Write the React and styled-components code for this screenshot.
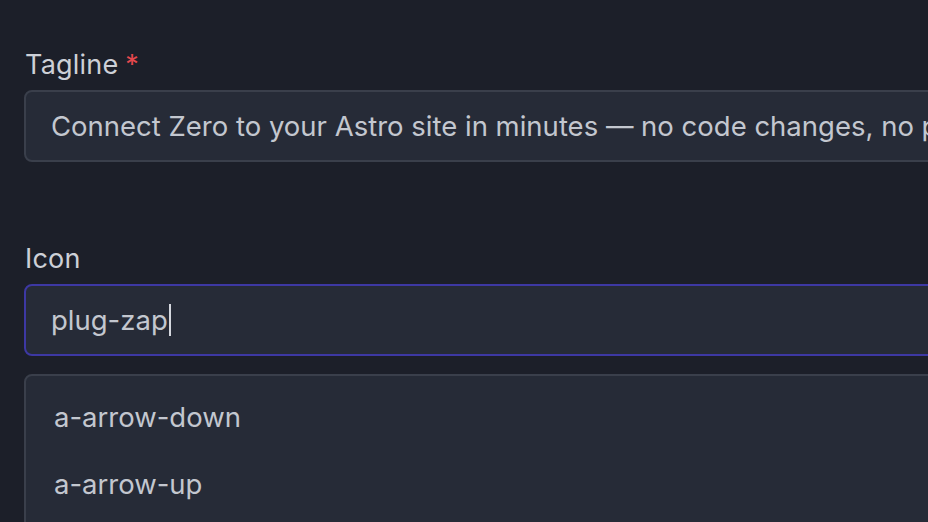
import React from "react";
import styled, { createGlobalStyle } from "styled-components";

const GlobalStyle = createGlobalStyle`
    html, body {
        margin: 0;
        padding: 0;
        background: #1c1f29;
        overflow: hidden;
    }
    body {
        font-family: Inter, "Noto Sans", sans-serif;
        -webkit-font-smoothing: antialiased;
    }
`;

const Page = styled.div`
    width: 904px;
    height: 474px;
    overflow: hidden;
    padding: 48px 0 0 24px;
`;

const Field = styled.div`
    display: flex;
    flex-direction: column;
    gap: 8px;
    margin-bottom: ${(p) => p.$spacing || 0}px;
`;

const Label = styled.label`
    font-size: 27px;
    font-weight: 400;
    color: #cdd0d7;
    line-height: 34px;
    padding-left: 1px;
    letter-spacing: 0.2px;
`;

const Required = styled.span`
    color: #e5484d;
    margin-left: 7px;
`;

const Input = styled.div`
    box-sizing: border-box;
    width: 960px;
    height: 72px;
    display: flex;
    align-items: center;
    padding: 0 25px;
    background: #262b37;
    border: 2px solid ${(p) => (p.$focused ? "#3d38a3" : "#3a3f4b")};
    border-radius: 8px;
    font-size: 27.5px;
    color: #c3c7cf;
    white-space: nowrap;
    overflow: hidden;
`;

const Caret = styled.span`
    display: inline-block;
    width: 2px;
    height: 32px;
    background: #d4d7de;
    margin-left: 1px;
`;

const Dropdown = styled.ul`
    box-sizing: border-box;
    width: 960px;
    list-style: none;
    margin: 18px 0 0;
    padding: 7px 0 0;
    background: #262b37;
    border: 2px solid #3a3f4b;
    border-radius: 8px;
    height: 200px;
`;

const Option = styled.li`
    height: 67px;
    display: flex;
    align-items: center;
    padding: 0 28px;
    font-size: 27.5px;
    color: #c3c7cf;
`;

const icons = ["a-arrow-down", "a-arrow-up"];

export default function App() {
    return (
        <Page>
            <GlobalStyle />
            <Field $spacing={80}>
                <Label>
                    Tagline<Required>*</Required>
                </Label>
                <Input>
                    Connect Zero to your Astro site in minutes — no code changes, no p
                </Input>
            </Field>
            <Field>
                <Label>Icon</Label>
                <Input $focused>
                    plug-zap
                    <Caret />
                </Input>
            </Field>
            <Dropdown>
                {icons.map((name) => (
                    <Option key={name}>{name}</Option>
                ))}
            </Dropdown>
        </Page>
    );
}
